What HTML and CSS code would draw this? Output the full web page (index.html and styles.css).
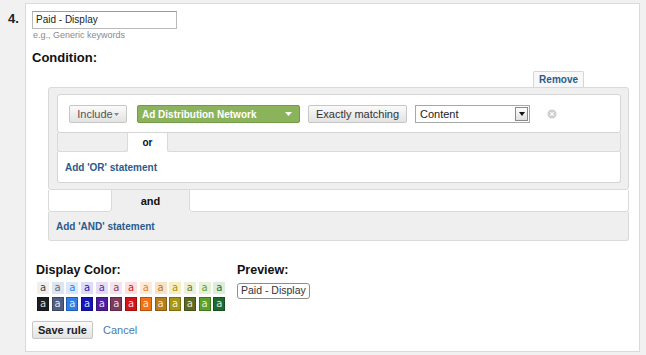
FILE: index.html
```html
<!DOCTYPE html>
<html>
<head>
<meta charset="utf-8">
<link rel="stylesheet" href="styles.css">
</head>
<body>
<div class="page">
  <div class="num">4.</div>
  <div class="panel">
    <div class="text-input">Paid - Display</div>
    <div class="hint">e.g., Generic keywords</div>
    <div class="section-title">Condition:</div>
    <div class="cond">
      <div class="tab-row"><span class="remove-tab">Remove</span></div>
      <div class="cond-box">
        <div class="rule-row">
          <span class="btn include">Include<svg class="caret" width="5" height="3" viewBox="0 0 5 3"><path d="M0 0H5L2.5 3Z" fill="#888"/></svg></span>
          <span class="green-select"><span>Ad Distribution Network</span><svg width="7" height="4" viewBox="0 0 7 4"><path d="M0 0H7L3.5 4Z" fill="#fff"/></svg></span>
          <span class="btn exact">Exactly matching</span>
          <span class="select"><span>Content</span><span class="sel-arrow"><svg width="6" height="4" viewBox="0 0 6 4"><path d="M0 0H6L3 4Z" fill="#111"/></svg></span></span>
          <svg class="close-x" width="10" height="10" viewBox="0 0 10 10"><circle cx="5" cy="5" r="4.5" fill="#cfcfcf"/><path d="M3.3 3.3L6.7 6.7M6.7 3.3L3.3 6.7" stroke="#fff" stroke-width="1.2"/></svg>
        </div>
        <div class="connector or-conn">
          <div class="side side-or-left"></div>
          <div class="tab or-tab">or</div>
          <div class="side side-fill"></div>
        </div>
        <div class="add-box or-box"><span class="link-bold">Add 'OR' statement</span></div>
      </div>
      <div class="connector and-conn">
        <div class="side side-and-left"></div>
        <div class="tab and-tab">and</div>
        <div class="side side-fill"></div>
      </div>
      <div class="add-box and-box"><span class="link-bold">Add 'AND' statement</span></div>
    </div>
    <div class="display-row">
      <div class="colors">
        <div class="label">Display Color:</div>
        <div class="swatches">
          <span class="sw light" style="background:#efefef;color:#444">a</span>
          <span class="sw light" style="background:#dfe5ef;color:#5a6a8a">a</span>
          <span class="sw light" style="background:#dbe8fb;color:#2f7fe0">a</span>
          <span class="sw light" style="background:#dcdcf7;color:#1a1ab5">a</span>
          <span class="sw light" style="background:#e6dcf7;color:#5c2ca8">a</span>
          <span class="sw light" style="background:#f4e4ec;color:#8c3e64">a</span>
          <span class="sw light" style="background:#fbe0e0;color:#c81e1e">a</span>
          <span class="sw light" style="background:#fdebd8;color:#e8801e">a</span>
          <span class="sw light" style="background:#f9e3c6;color:#b47a1e">a</span>
          <span class="sw light" style="background:#f7efc2;color:#a59418">a</span>
          <span class="sw light" style="background:#eef1d7;color:#6b7a1f">a</span>
          <span class="sw light" style="background:#e6f2d6;color:#5fa02a">a</span>
          <span class="sw light" style="background:#dbeedd;color:#226e30">a</span>
          <span class="sw dark" style="background:#1e1e1e">a</span>
          <span class="sw dark" style="background:#4f5f80">a</span>
          <span class="sw dark" style="background:#2f7fe8">a</span>
          <span class="sw dark" style="background:#1414b8">a</span>
          <span class="sw dark" style="background:#4c1e9e">a</span>
          <span class="sw dark" style="background:#7c3a5c">a</span>
          <span class="sw dark" style="background:#d41414">a</span>
          <span class="sw dark" style="background:#f07214">a</span>
          <span class="sw dark" style="background:#b87c1c">a</span>
          <span class="sw dark" style="background:#a89612">a</span>
          <span class="sw dark" style="background:#5b6a22">a</span>
          <span class="sw dark" style="background:#5aa02a">a</span>
          <span class="sw dark" style="background:#1e6a2e">a</span>
        </div>
      </div>
      <div class="preview">
        <div class="label">Preview:</div>
        <span class="badge">Paid - Display</span>
      </div>
    </div>
    <div class="actions">
      <span class="btn save">Save rule</span>
      <span class="cancel">Cancel</span>
    </div>
  </div>
</div>
</body>
</html>
```
FILE: styles.css
```css
* { box-sizing: border-box; }
body {
  margin: 0;
  background: #f1f1f1;
  font-family: "Liberation Sans", Arial, sans-serif;
  color: #222;
}
.page {
  display: flex;
  padding: 3px 6px 0 0;
}
.num {
  width: 25px;
  padding: 8px 0 0 8px;
  font-weight: bold;
  font-size: 13px;
  line-height: 15px;
  color: #222;
}
.panel {
  flex: 1;
  background: #fff;
  border: 1px solid #dadada;
  padding: 7px 10px 12px 6px;
}
.text-input {
  width: 145px;
  height: 18px;
  border: 1px solid #b9b9b9;
  border-top-color: #9a9a9a;
  font-size: 10px;
  line-height: 16px;
  padding-left: 3px;
  color: #222;
}
.hint {
  font-size: 9px;
  line-height: 11px;
  color: #8a8a8a;
  margin-top: 1px;
  padding-left: 1px;
}
.section-title {
  font-weight: bold;
  font-size: 13px;
  line-height: 15px;
  margin-top: 9px;
  color: #111;
}
.cond {
  margin: 6px 0 0 16px;
}
.tab-row {
  display: flex;
  justify-content: flex-end;
  padding-right: 45px;
}
.remove-tab {
  height: 16px;
  line-height: 15px;
  padding: 0 5px;
  border: 1px solid #d6d6d6;
  border-bottom: none;
  border-radius: 2px 2px 0 0;
  background: #f8f8f8;
  font-weight: bold;
  font-size: 10px;
  color: #2a5b8c;
}
.cond-box {
  background: #efefef;
  border: 1px solid #d9d9d9;
  border-radius: 3px;
  padding: 6px 7px 6px 8px;
}
.rule-row {
  height: 39px;
  background: #fff;
  border: 1px solid #d6d6d6;
  border-radius: 3px;
  display: flex;
  align-items: center;
  padding: 1px 0 0 11px;
}
.btn {
  height: 18px;
  border: 1px solid #c6c6c6;
  border-radius: 2px;
  background: linear-gradient(#fafafa, #e3e3e3);
  font-size: 11px;
  color: #333;
  display: inline-flex;
  align-items: center;
  justify-content: center;
}
.include {
  width: 58px;
  color: #555;
}
.caret { margin-left: 1px; margin-top: 1px; }
.green-select {
  width: 163px;
  height: 18px;
  margin-left: 10px;
  background: #8bb35b;
  border: 1px solid #739a45;
  border-radius: 2px;
  color: #fff;
  font-weight: bold;
  font-size: 10px;
  display: flex;
  align-items: center;
  justify-content: space-between;
  padding: 0 7px 0 4px;
}
.exact {
  width: 99px;
  margin-left: 8px;
}
.select {
  width: 115px;
  height: 18px;
  margin-left: 8px;
  border: 1px solid #a8a8a8;
  background: #fff;
  font-size: 11px;
  color: #222;
  display: flex;
  align-items: center;
  justify-content: space-between;
  padding: 0 1px 0 4px;
}
.sel-arrow {
  width: 13px;
  height: 14px;
  border: 1px solid #8a8a8a;
  background: linear-gradient(#fff, #e0e0e0);
  display: flex;
  align-items: center;
  justify-content: center;
}
.close-x { margin-left: 17px; }
.connector {
  display: flex;
}
.or-conn { height: 19px; }
.and-conn { height: 22px; }
.side {
  border: 1px solid #dadada;
  border-top: none;
  border-radius: 0 0 3px 3px;
}
.or-conn .side { background: #efefef; }
.and-conn .side { background: #fff; }
.side-or-left { width: 71px; }
.side-and-left { width: 64px; }
.side-fill { flex: 1; }
.tab {
  display: flex;
  align-items: center;
  justify-content: center;
  font-weight: bold;
  color: #111;
}
.or-tab {
  width: 39px;
  background: #fff;
  font-size: 10px;
}
.and-tab {
  width: 77px;
  background: #efefef;
  font-size: 11px;
}
.add-box {
  border: 1px solid #d6d6d6;
  border-top: none;
  border-radius: 0 0 3px 3px;
  display: flex;
  align-items: center;
  padding-left: 7px;
}
.or-box {
  height: 31px;
  background: #fff;
}
.and-box {
  height: 29px;
  background: #efefef;
  border-color: #d9d9d9;
}
.link-bold {
  font-weight: bold;
  font-size: 10px;
  color: #2a5b8c;
}
.display-row {
  display: flex;
  margin-top: 22px;
}
.label {
  font-weight: bold;
  font-size: 12.5px;
  line-height: 14px;
  color: #111;
}
.colors {
  width: 205px;
  padding-left: 4px;
}
.swatches {
  display: grid;
  grid-template-columns: repeat(13, 12px);
  grid-template-rows: 12px 14px;
  column-gap: 2.7px;
  row-gap: 3px;
  margin: 5px 0 0 1px;
}
.sw {
  text-align: center;
  font-size: 10px;
  font-family: "DejaVu Sans", sans-serif;
}
.sw.light { line-height: 11px; }
.sw.dark {
  line-height: 12px;
  color: rgba(255,255,255,0.85);
  border: 1px solid rgba(0,0,0,0.25);
}
.badge {
  display: inline-block;
  margin-top: 6px;
  height: 16px;
  line-height: 13px;
  padding: 0 3px;
  border: 1.5px solid #8e8e8e;
  border-radius: 3px;
  font-size: 10.5px;
  color: #333;
}
.actions {
  display: flex;
  align-items: center;
  margin-top: 10px;
}
.save {
  width: 61px;
  font-weight: bold;
  font-size: 11px;
  color: #222;
}
.cancel {
  margin-left: 10px;
  font-size: 11px;
  color: #4a7aa8;
}
```
